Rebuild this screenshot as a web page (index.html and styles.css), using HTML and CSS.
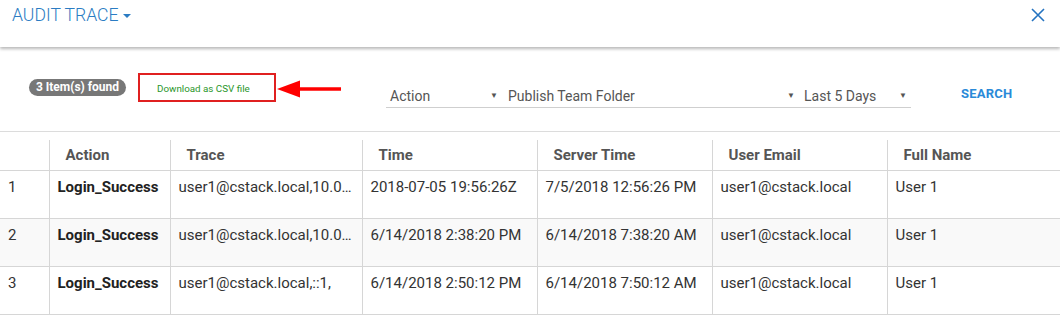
FILE: index.html
```html
<!DOCTYPE html>
<html>
<head>
<meta charset="utf-8">
<link rel="stylesheet" href="styles.css">
</head>
<body>
<header class="topbar">
  <div class="title">AUDIT TRACE<span class="caret"></span></div>
  <svg class="close" width="14" height="14" viewBox="0 0 14 14"><path d="M1 1 L13 13 M13 1 L1 13" stroke="#2473c0" stroke-width="1.6" fill="none"/></svg>
</header>
<div class="toolbar">
  <span class="badge">3 Item(s) found</span>
  <div class="csv">Download as CSV file</div>
  <svg class="arrow" width="66" height="20" viewBox="0 0 66 20"><path d="M20 8.2 H64 V11.8 H20 Z" fill="#f00"/><path d="M0 10 L23 1.5 L23 18.5 Z" fill="#f00"/></svg>
  <div class="filters">
    <div class="sel w1"><span>Action</span><span class="tri">▼</span></div>
    <div class="sel w2"><span>Publish Team Folder</span><span class="tri">▼</span></div>
    <div class="sel w3"><span>Last 5 Days</span><span class="tri">▼</span></div>
  </div>
  <div class="search">SEARCH</div>
</div>
<div class="tablewrap">
<table class="grid">
  <colgroup><col class="c0"><col class="c1"><col class="c2"><col class="c3"><col class="c4"><col class="c5"><col></colgroup>
  <thead>
    <tr><th></th><th>Action</th><th>Trace</th><th>Time</th><th>Server Time</th><th>User Email</th><th>Full Name</th></tr>
  </thead>
  <tbody>
    <tr><td>1</td><td class="b">Login_Success</td><td>user1@cstack.local,10.0…</td><td>2018-07-05 19:56:26Z</td><td>7/5/2018 12:56:26 PM</td><td>user1@cstack.local</td><td>User 1</td></tr>
    <tr class="alt"><td>2</td><td class="b">Login_Success</td><td>user1@cstack.local,10.0…</td><td>6/14/2018 2:38:20 PM</td><td>6/14/2018 7:38:20 AM</td><td>user1@cstack.local</td><td>User 1</td></tr>
    <tr><td>3</td><td class="b">Login_Success</td><td>user1@cstack.local,::1,</td><td>6/14/2018 2:50:12 PM</td><td>6/14/2018 7:50:12 AM</td><td>user1@cstack.local</td><td>User 1</td></tr>
  </tbody>
</table>
</div>
</body>
</html>
```
FILE: styles.css
```css
* { box-sizing: border-box; }
html, body { margin: 0; padding: 0; background: #fff; }
body { font-family: Roboto, "Liberation Sans", Arial, sans-serif; color: #333; width: 1060px; overflow: hidden; }

.topbar {
  height: 47px;
  display: flex;
  justify-content: space-between;
  align-items: flex-start;
  padding: 4px 15px 0 12px;
  box-shadow: 0 2px 3px rgba(0,0,0,0.28);
  position: relative;
}
.title {
  font-size: 17.6px;
  font-weight: 300;
  color: #2b7cc3;
  display: flex;
  align-items: center;
  line-height: 22px;
}
.caret {
  display: inline-block;
  margin-left: 4px;
  margin-top: 1px;
  border-left: 4px solid transparent;
  border-right: 4px solid transparent;
  border-top: 4px solid #2b7cc3;
}
.close { margin-top: 4px; }

.toolbar {
  display: flex;
  align-items: flex-start;
  margin-top: 26px;
  padding-left: 29px;
  height: 58px;
}
.badge {
  margin-top: 6px;
  background: #777;
  color: #fff;
  font-weight: 700;
  font-size: 12px;
  line-height: 17px;
  height: 17px;
  border-radius: 9px;
  width: 97px;
  text-align: center;
  white-space: nowrap;
}
.csv {
  margin-left: 12px;
  width: 138px;
  height: 29px;
  border: 2px solid #e02020;
  color: #2a962a;
  font-size: 9.8px;
  padding-left: 17px;
  line-height: 27px;
}
.arrow { margin-left: 1px; margin-top: 6px; }
.filters {
  margin-left: 43px;
  margin-top: 7px;
  display: flex;
  width: 525px;
  border-bottom: 1px solid #cfcfcf;
  height: 28px;
}
.sel {
  display: flex;
  justify-content: space-between;
  align-items: center;
  font-size: 14px;
  color: #555;
  padding: 4px 4px 0 4px;
}
.tri { font-size: 8px; color: #555; }
.w1 { width: 116px; }
.w2 { width: 295px; padding-left: 6px; padding-right: 2px; }
.w3 { width: 114px; padding-left: 7px; }
.search {
  margin-left: 50px;
  margin-top: 13px;
  color: #2a8ad8;
  font-weight: 700;
  font-size: 13px;
  letter-spacing: 0.2px;
}

.tablewrap {
  border-top: 1px solid #dcdcdc;
  padding-top: 8px;
}
.grid {
  width: 1060px;
  border-collapse: collapse;
  table-layout: fixed;
  font-size: 15px;
}
.c0 { width: 49px; }
.c1 { width: 121px; }
.c2 { width: 192px; }
.c3 { width: 175px; }
.c4 { width: 175px; }
.c5 { width: 175px; }
.grid th, .grid td {
  border-left: 1px solid #d6d6d6;
  border-bottom: 1px solid #d6d6d6;
  text-align: left;
  white-space: nowrap;
  overflow: hidden;
}
.grid th:first-child, .grid td:first-child { border-left: none; }
.grid th {
  height: 30px;
  color: #555;
  font-weight: 700;
  padding: 0 8px 0 16px;
  vertical-align: middle;
}
.grid td {
  height: 48px;
  vertical-align: top;
  padding: 7px 8px 0 8px;
  color: #333;
  line-height: 18px;
}
.grid td.b { font-weight: 700; color: #222; }
.grid tr.alt td { background: #f9f9f9; }
```
